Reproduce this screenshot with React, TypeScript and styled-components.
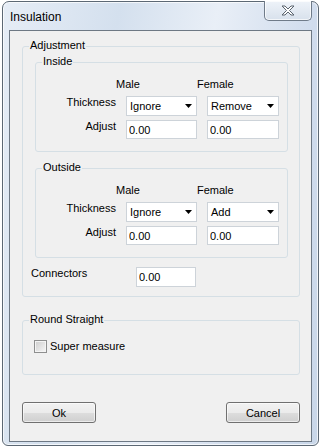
import styled, { createGlobalStyle } from 'styled-components';

const GlobalStyle = createGlobalStyle`
  html, body {
    margin: 0;
    padding: 0;
    background: #ffffff;
  }
  body {
    font-family: "Liberation Sans", Arial, sans-serif;
    font-size: 11px;
    color: #000000;
  }
  * {
    box-sizing: border-box;
  }
`;

type Side = { title: string; male: string; female: string };

const sides: Side[] = [
  { title: 'Inside', male: 'Ignore', female: 'Remove' },
  { title: 'Outside', male: 'Ignore', female: 'Add' },
];

const CloseGlyph = () => (
  <svg width="14" height="11" viewBox="-1 -1 14 11">
    <polygon
      points="0,0 3,0 6,3 9,0 12,0 7.5,4.5 12,9 9,9 6,6 3,9 0,9 4.5,4.5"
      fill="#ffffff"
      stroke="#59636e"
      strokeWidth="1"
      strokeLinejoin="round"
    />
  </svg>
);

const ArrowGlyph = () => (
  <svg width="7" height="4" viewBox="0 0 7 4">
    <polygon points="0,0 7,0 3.5,4" fill="#000000" />
  </svg>
);

const SideGroup = ({ side, first }: { side: Side; first: boolean }) => (
  <SubGroup $first={first}>
    <Legend>{side.title}</Legend>
    <SideGrid>
      <span />
      <HeaderCell>Male</HeaderCell>
      <HeaderCell>Female</HeaderCell>
      <RowLabel>Thickness</RowLabel>
      <Combo>
        <span>{side.male}</span>
        <ArrowGlyph />
      </Combo>
      <Combo>
        <span>{side.female}</span>
        <ArrowGlyph />
      </Combo>
      <RowLabel>Adjust</RowLabel>
      <TextBox readOnly value="0.00" />
      <TextBox readOnly value="0.00" />
    </SideGrid>
  </SubGroup>
);

export default function App() {
  return (
    <>
      <GlobalStyle />
      <Window>
        <TitleBar>
          <Title>Insulation</Title>
          <CloseButton>
            <CloseGlyph />
          </CloseButton>
        </TitleBar>
        <Client>
          <Group>
            <Legend>Adjustment</Legend>
            <AdjustBody>
              {sides.map((side, i) => (
                <SideGroup key={side.title} side={side} first={i === 0} />
              ))}
              <ConnectorRow>
                <ConnectorLabel>Connectors</ConnectorLabel>
                <ConnectorBox readOnly value="0.00" />
              </ConnectorRow>
            </AdjustBody>
          </Group>
          <Group $top={16}>
            <Legend>Round Straight</Legend>
            <RoundBody>
              <CheckRow>
                <CheckBox />
                <span>Super measure</span>
              </CheckRow>
            </RoundBody>
          </Group>
          <ButtonRow>
            <Button>Ok</Button>
            <Button>Cancel</Button>
          </ButtonRow>
        </Client>
      </Window>
    </>
  );
}

const Window = styled.div`
  margin: 1px 0 0 2px;
  width: 317px;
  height: 445px;
  display: flex;
  flex-direction: column;
  padding: 0 6px 3px;
  border: 1px solid #5c6874;
  border-radius: 7px 7px 6px 6px;
  background: linear-gradient(
    100deg,
    #e6edf6 0%,
    #d4e0ee 30%,
    #e9eff7 55%,
    #d0dced 80%,
    #c9d7e9 100%
  );
  box-shadow: inset 0 0 0 1px rgba(255, 255, 255, 0.7);
`;

const TitleBar = styled.div`
  height: 28px;
  display: flex;
  justify-content: space-between;
  align-items: flex-start;
  padding-left: 1px;
`;

const Title = styled.span`
  margin-top: 8px;
  font-size: 12px;
  line-height: 14px;
  color: #000000;
`;

const CloseButton = styled.div`
  width: 48px;
  height: 20px;
  margin-top: -1px;
  display: flex;
  align-items: center;
  justify-content: center;
  border: 1px solid #6f7b89;
  border-top: none;
  border-radius: 0 0 5px 5px;
  background: linear-gradient(#eef3f9, #d8e1ec);
  box-shadow: inset 0 0 0 1px rgba(255, 255, 255, 0.7);
`;

const Client = styled.div`
  flex: 1;
  display: flex;
  flex-direction: column;
  padding: 8px 11px 0 12px;
  border: 1px solid #6d7884;
  background: #f0f0f0;
`;

const Group = styled.fieldset<{ $top?: number }>`
  margin: ${(p) => p.$top ?? 0}px 0 0;
  padding: 0;
  min-inline-size: 0;
  border: 1px solid #d5dfe5;
  border-radius: 3px;
`;

const SubGroup = styled(Group)<{ $first: boolean }>`
  margin: ${(p) => (p.$first ? 0 : 9)}px 3px 0 4px;
`;

const Legend = styled.legend`
  margin-left: 6px;
  padding: 0 1px 2px;
  font-size: 11px;
  line-height: 13px;
`;

const AdjustBody = styled.div`
  padding: 1px 8px 9px;
`;

const SideGrid = styled.div`
  display: grid;
  grid-template-columns: 80px 71px 72px;
  column-gap: 10px;
  row-gap: 4px;
  align-items: start;
  padding: 8px 0 12px;
`;

const HeaderCell = styled.span`
  margin: 0 0 1px -10px;
  line-height: 13px;
`;

const RowLabel = styled.span`
  text-align: right;
  line-height: 13px;
`;

const Combo = styled.div`
  height: 20px;
  display: flex;
  align-items: center;
  justify-content: space-between;
  padding: 0 4px 0 3px;
  border: 1px solid #cdd3d9;
  background: #ffffff;
`;

const TextBox = styled.input`
  width: 100%;
  height: 19px;
  margin: 0;
  padding: 0 2px;
  border: 1px solid #cdd3d9;
  background: #ffffff;
  font-family: inherit;
  font-size: 11px;
  color: #000000;
  outline: none;
`;

const ConnectorRow = styled.div`
  display: flex;
  align-items: flex-start;
  margin-top: 9px;
`;

const ConnectorLabel = styled.span`
  width: 105px;
  line-height: 13px;
`;

const ConnectorBox = styled(TextBox)`
  width: 60px;
  height: 20px;
`;

const RoundBody = styled.div`
  padding: 12px 0 21px 11px;
`;

const CheckRow = styled.div`
  display: flex;
  align-items: center;
  gap: 3px;
  line-height: 13px;
`;

const CheckBox = styled.div`
  width: 13px;
  height: 13px;
  border: 1px solid #8e8f8f;
  background: linear-gradient(135deg, #cdcdcd, #f7f7f7);
  box-shadow: inset 0 0 0 1px #f4f4f4;
`;

const ButtonRow = styled.div`
  display: flex;
  justify-content: space-between;
  margin-top: 27px;
`;

const Button = styled.div`
  width: 74px;
  height: 21px;
  display: flex;
  align-items: center;
  justify-content: center;
  border: 1px solid #707070;
  border-radius: 3px;
  background: linear-gradient(#f2f2f2 0%, #ebebeb 50%, #dddddd 51%, #cfcfcf 100%);
  box-shadow: inset 0 0 0 1px rgba(255, 255, 255, 0.6);
`;
